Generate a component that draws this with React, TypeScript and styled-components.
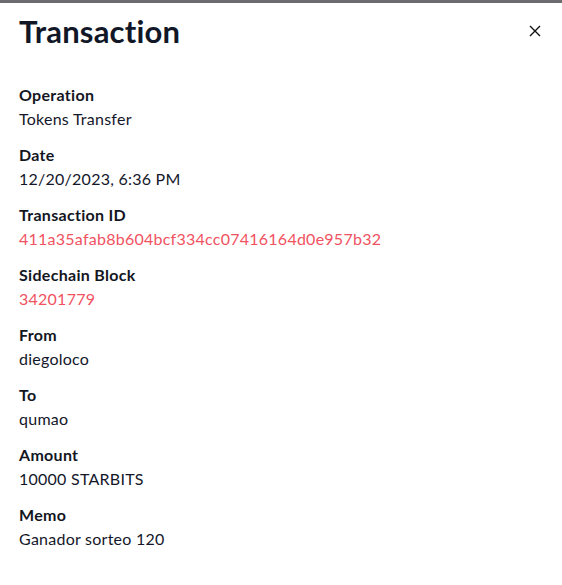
import React from "react";
import styled, { createGlobalStyle } from "styled-components";

const Global = createGlobalStyle`
  html, body { margin: 0; padding: 0; background: #ffffff; }
  body { font-family: "Lato", "Noto Sans", sans-serif; }
`;

const Page = styled.div`
  position: relative;
  width: 562px;
  height: 585px;
  background: #ffffff;
  overflow: hidden;
`;

const Backdrop = styled.div`
  position: absolute;
  top: 0;
  left: 0;
  right: 0;
  height: 3px;
  background: #6c6c6e;
`;

const Header = styled.div`
  display: flex;
  align-items: center;
  justify-content: space-between;
  padding: 13px 18px 0 19px;
  height: 36px;
`;

const Title = styled.h1`
  margin: 0;
  font-family: "Lato", sans-serif;
  font-weight: 700;
  font-size: 31px;
  line-height: 36px;
  color: #121727;
  letter-spacing: 0.2px;
`;

const Close = styled.button`
  border: 0;
  background: transparent;
  padding: 0;
  width: 16px;
  height: 16px;
  display: flex;
  align-items: center;
  justify-content: center;
  cursor: pointer;
  margin-right: 1px;
`;

const List = styled.dl`
  margin: 34px 0 0 0;
  padding: 0 19px;
  display: flex;
  flex-direction: column;
  gap: 12px;
`;

const Field = styled.div`
  display: flex;
  flex-direction: column;
`;

const Label = styled.dt`
  font-weight: 700;
  font-size: 16px;
  line-height: 24px;
  color: #14161f;
  letter-spacing: 0.3px;
`;

const Value = styled.dd<{ $link?: boolean }>`
  margin: 0;
  font-size: 16px;
  line-height: 24px;
  color: ${(p) => (p.$link ? "#f0525f" : "#14172a")};
  letter-spacing: 0.25px;
`;

const fields: { label: string; value: string; link?: boolean }[] = [
  { label: "Operation", value: "Tokens Transfer" },
  { label: "Date", value: "12/20/2023, 6:36 PM" },
  { label: "Transaction ID", value: "411a35afab8b604bcf334cc07416164d0e957b32", link: true },
  { label: "Sidechain Block", value: "34201779", link: true },
  { label: "From", value: "diegoloco" },
  { label: "To", value: "qumao" },
  { label: "Amount", value: "10000 STARBITS" },
  { label: "Memo", value: "Ganador sorteo 120" },
];

export default function App() {
  return (
    <Page>
      <Global />
      <Backdrop />
      <Header>
        <Title>Transaction</Title>
        <Close aria-label="Close">
          <svg width="12" height="12" viewBox="0 0 12 12">
            <path d="M1 1L11 11M11 1L1 11" stroke="#111" strokeWidth="1.4" />
          </svg>
        </Close>
      </Header>
      <List>
        {fields.map((f) => (
          <Field key={f.label}>
            <Label>{f.label}</Label>
            <Value $link={f.link}>{f.value}</Value>
          </Field>
        ))}
      </List>
    </Page>
  );
}
